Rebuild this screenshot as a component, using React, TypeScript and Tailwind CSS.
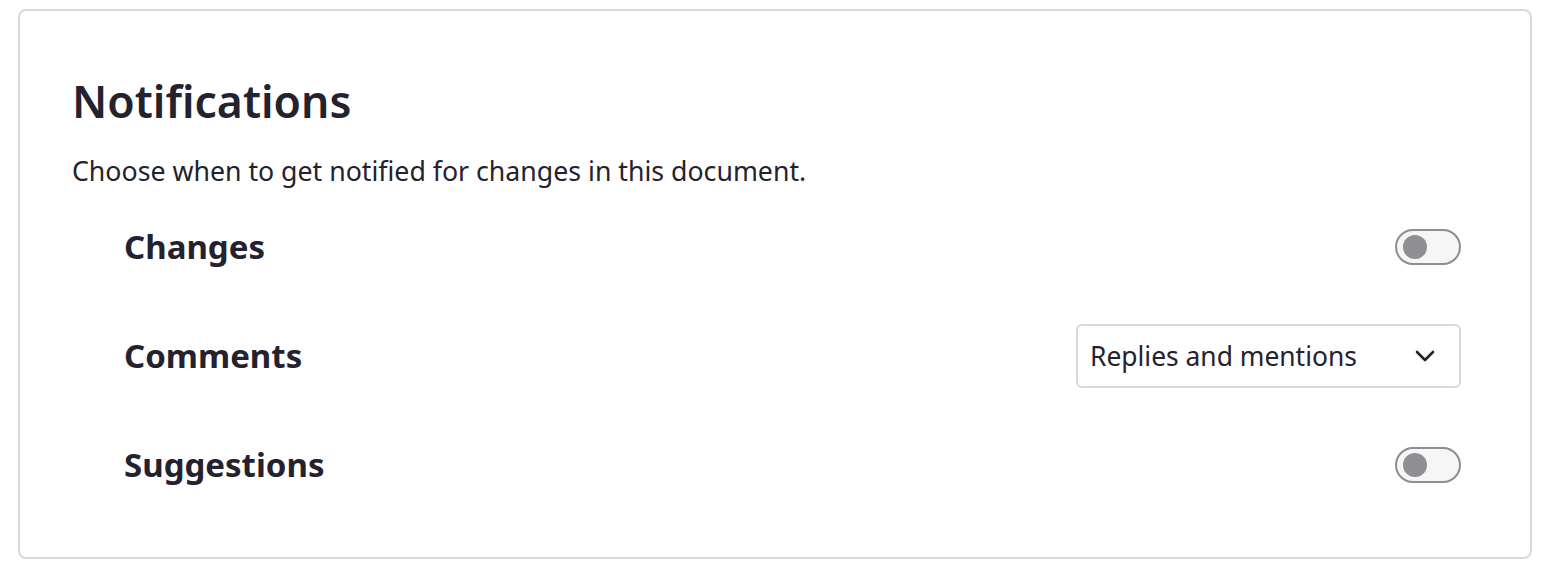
import React from 'react';

const Toggle: React.FC = () => (
    <button
        type="button"
        role="switch"
        aria-checked="false"
        className="flex items-center w-[66px] h-[36px] rounded-full border-2 border-[#8d8d92] bg-[#f6f6f6] pl-[6px]"
    >
        <span className="block w-[24px] h-[24px] rounded-full bg-[#8e8e93]" />
    </button>
);

const Select: React.FC = () => (
    <div className="flex items-center justify-between w-[385px] h-[64px] rounded-[6px] border-2 border-[#d9d9d9] bg-white pl-[12px] pr-[24px]">
        <span className="text-[26.4px] leading-[32px]">Replies and mentions</span>
        <svg width="20" height="12" viewBox="0 0 20 12" fill="none">
            <path d="M2 2l8 8 8-8" stroke="#24222e" strokeWidth="2.6" strokeLinecap="round" strokeLinejoin="round" />
        </svg>
    </div>
);

const Row: React.FC<{ label: string; children: React.ReactNode }> = ({ label, children }) => (
    <div className="flex items-center justify-between h-[109px]">
        <span className="text-[33px] leading-[44px] font-bold">{label}</span>
        {children}
    </div>
);

export default function App() {
    return (
        <div
            className="pt-[9px] pl-[18px] text-[#24222e]"
            style={{ fontFamily: '"Noto Sans", "Open Sans", sans-serif' }}
        >
            <div className="w-[1514px] h-[550px] rounded-[8px] border-2 border-[#dadada] bg-white pt-[62px] pl-[52px] pr-[69px]">
                <h1 className="text-[44.5px] leading-[56px] font-semibold">Notifications</h1>
                <p className="mt-[26px] text-[26.7px] leading-[32px]">
                    Choose when to get notified for changes in this document.
                </p>
                <div className="pl-[52px] mt-[5px]">
                    <Row label="Changes">
                        <Toggle />
                    </Row>
                    <Row label="Comments">
                        <Select />
                    </Row>
                    <Row label="Suggestions">
                        <Toggle />
                    </Row>
                </div>
            </div>
        </div>
    );
}
